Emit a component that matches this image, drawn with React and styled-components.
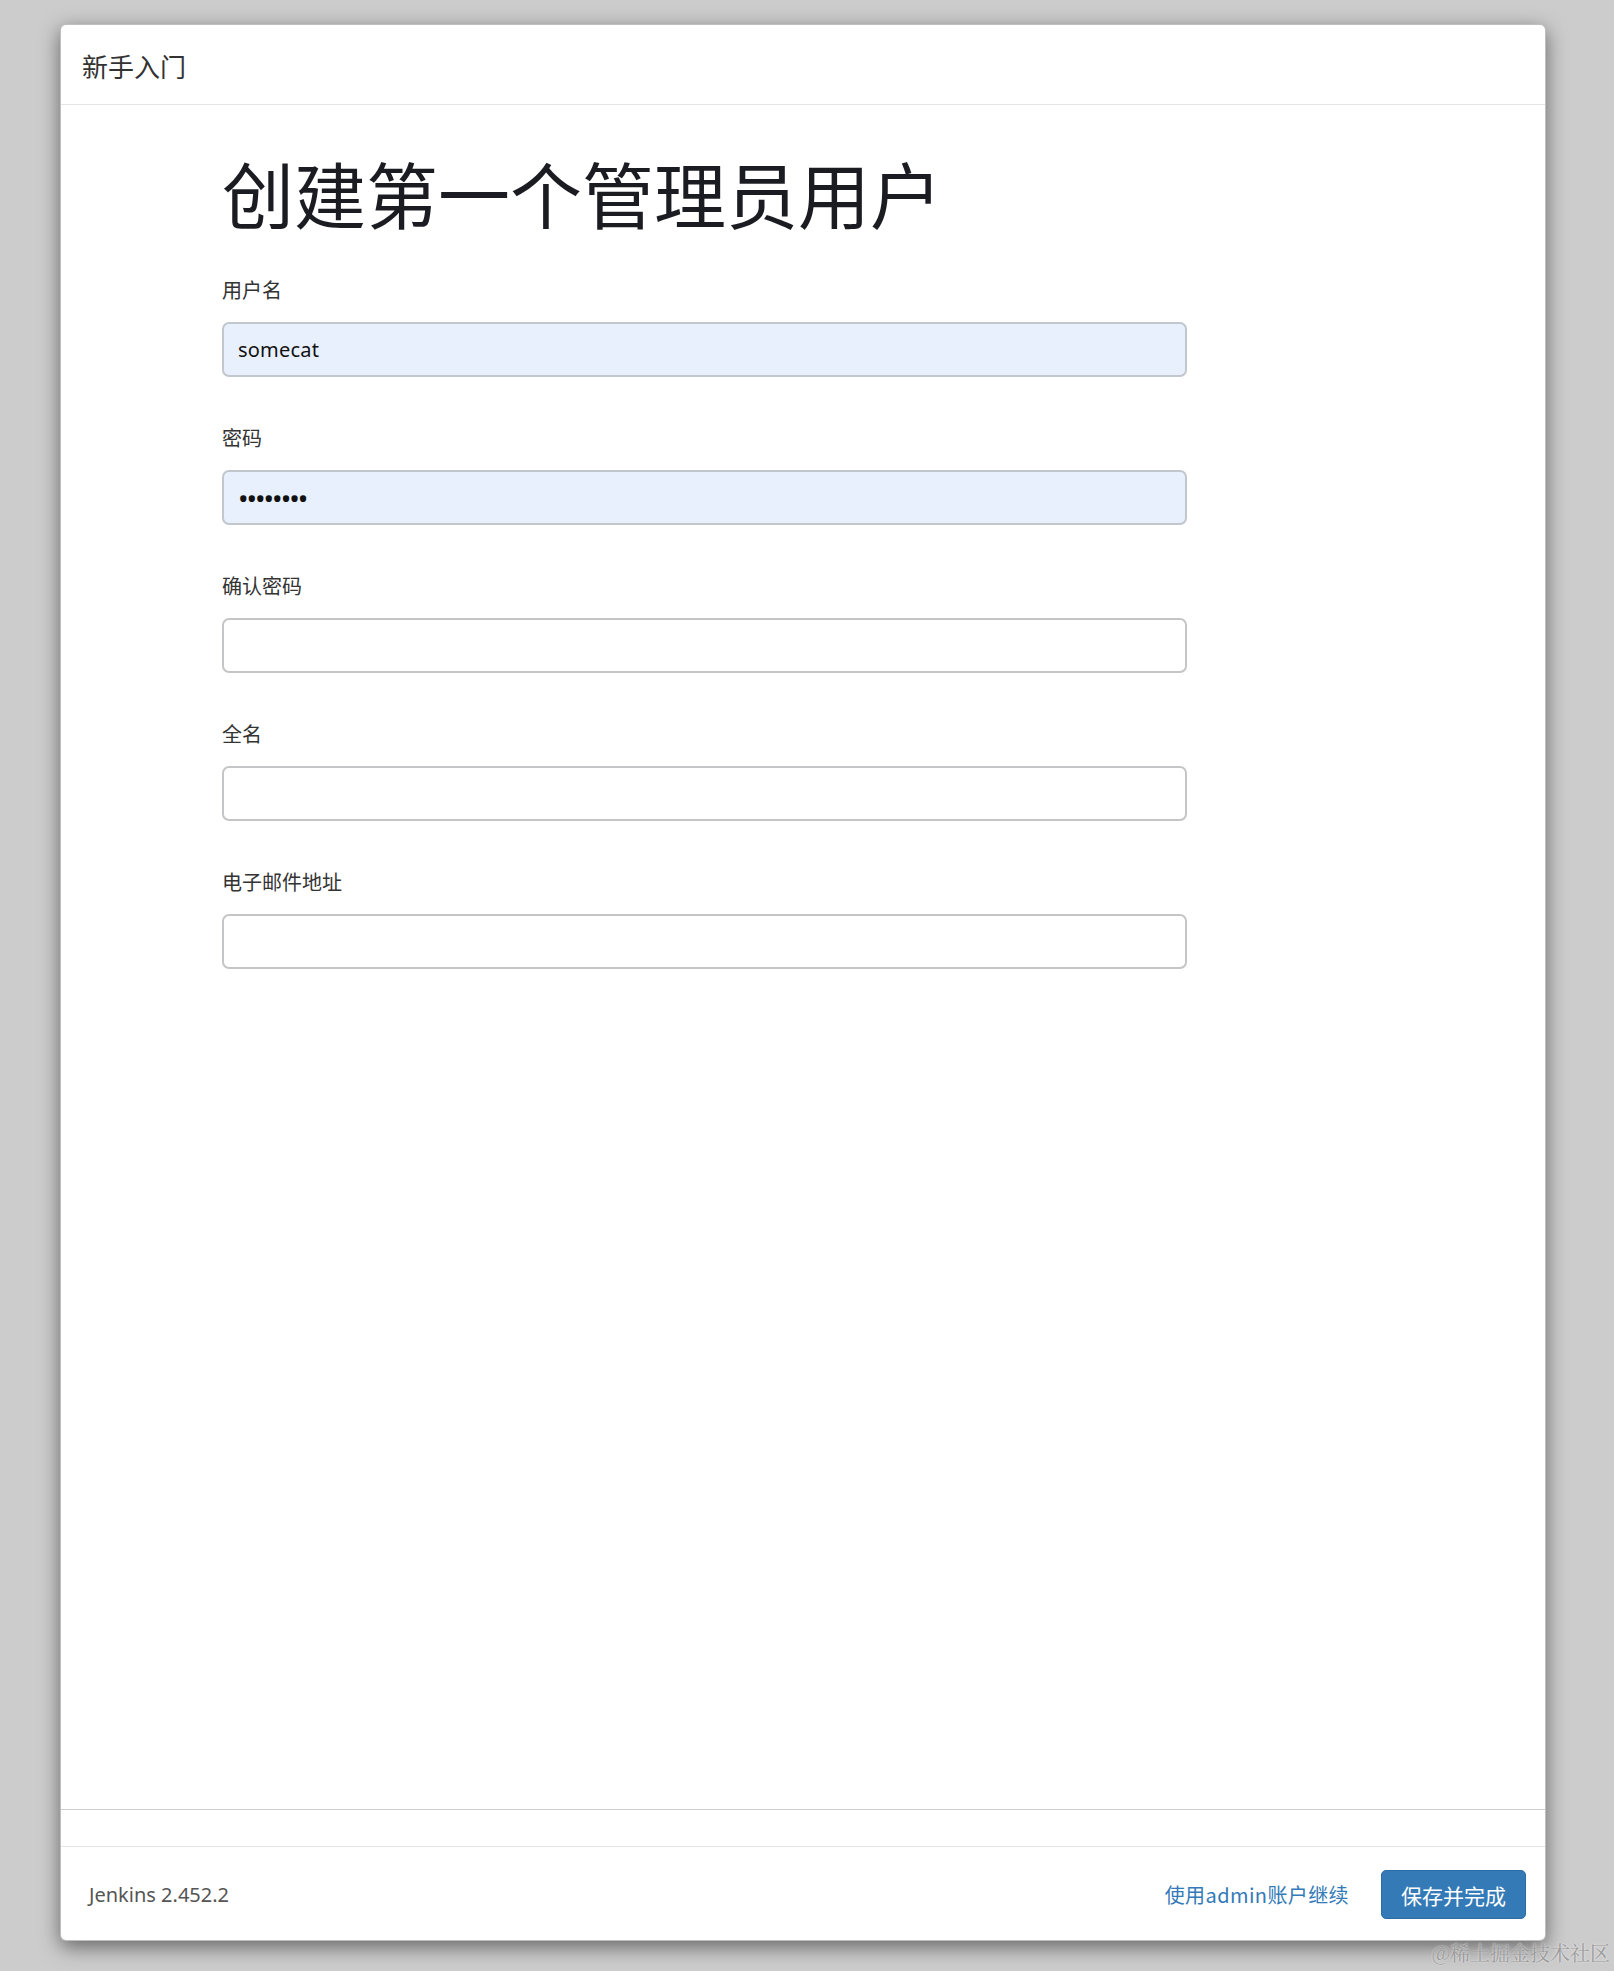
import React from "react"
import styled, { createGlobalStyle } from "styled-components"

const GlobalStyle = createGlobalStyle`
  html, body {
    margin: 0;
    padding: 0;
    background: #cccccc;
  }
  body {
    font-family: "Noto Sans", "Noto Sans CJK SC", sans-serif;
  }
`

const Page = styled.div`
  position: relative;
  width: 1614px;
  height: 1971px;
  box-sizing: border-box;
  padding: 24px 68px 30px 60px;
  display: flex;
`

const Modal = styled.div`
  flex: 1;
  display: flex;
  flex-direction: column;
  background: #fff;
  border: 1px solid rgba(0, 0, 0, 0.25);
  border-radius: 6px;
  box-shadow: 0 6px 20px rgba(0, 0, 0, 0.5);
  overflow: hidden;
`

const Header = styled.div`
  height: 80px;
  box-sizing: border-box;
  display: flex;
  align-items: center;
  padding: 2px 21px 0;
  border-bottom: 1px solid #e5e5e5;
  font-family: "Noto Sans CJK SC", sans-serif;
  font-size: 26px;
  color: #333;
`

const Body = styled.div`
  flex: 1;
  padding: 43px 0 0 161px;
  border-bottom: 1px solid #cfcfcf;
`

const Title = styled.h1`
  margin: 0 0 40px;
  font-family: "Noto Sans CJK SC", sans-serif;
  font-weight: 400;
  font-size: 72px;
  line-height: 88px;
  color: #1b1b22;
`

const Field = styled.div`
  display: flex;
  flex-direction: column;
  gap: 18px;
  width: 965px;
  margin-bottom: 47px;
`

const Label = styled.label`
  font-family: "Noto Sans CJK SC", sans-serif;
  font-size: 20px;
  line-height: 28px;
  color: #333;
`

const Input = styled.input`
  height: 55px;
  box-sizing: border-box;
  border: 2px solid ${p => (p.$filled ? "#c2c6cd" : "#c4c5c7")};
  border-radius: 7px;
  background: ${p => (p.$filled ? "#e8f0fe" : "#fff")};
  padding: 0 14px;
  font-family: "Noto Sans", sans-serif;
  font-size: ${p => (p.type === "password" ? "28px" : "20px")};
  color: #111;
  outline: none;
  letter-spacing: ${p => (p.type === "password" ? "-2px" : "0.2px")};
`

const Spacer = styled.div`
  height: 36px;
  border-bottom: 1px solid #e5e5e5;
`

const Footer = styled.div`
  height: 93px;
  box-sizing: border-box;
  display: flex;
  align-items: center;
  padding: 2px 19px 0 28px;
`

const Version = styled.div`
  margin-right: auto;
  font-family: "Noto Sans", sans-serif;
  font-size: 20px;
  color: #555;
`

const LinkButton = styled.a`
  font-family: "Noto Sans CJK SC", sans-serif;
  font-size: 20px;
  letter-spacing: 0.4px;
  color: #337ab7;
  text-decoration: none;
  margin-right: 32px;
  cursor: pointer;
`

const Primary = styled.button`
  height: 49px;
  padding: 0 19px;
  border: 1px solid #2e6da4;
  border-radius: 5px;
  background: #337ab7;
  color: #fff;
  font-family: "Noto Sans CJK SC", sans-serif;
  font-size: 21px;
  cursor: pointer;
`

const Watermark = styled.div`
  position: absolute;
  right: 4px;
  bottom: 4px;
  font-family: "Noto Serif CJK SC", "Noto Sans CJK SC", serif;
  font-size: 20px;
  color: #9a9a9a;
  text-shadow: 0 0 2px #f2f2f2;
`

const fields = [
  { label: "用户名", value: "somecat", type: "text" },
  { label: "密码", value: "password", type: "password" },
  { label: "确认密码", value: "", type: "password" },
  { label: "全名", value: "", type: "text" },
  { label: "电子邮件地址", value: "", type: "text" },
]

export default function App() {
  return (
    <>
      <GlobalStyle />
      <Page>
        <Modal>
          <Header>新手入门</Header>
          <Body>
            <Title>创建第一个管理员用户</Title>
            {fields.map(f => (
              <Field key={f.label}>
                <Label>{f.label}</Label>
                <Input type={f.type} defaultValue={f.value} $filled={!!f.value} />
              </Field>
            ))}
          </Body>
          <Spacer />
          <Footer>
            <Version>Jenkins 2.452.2</Version>
            <LinkButton>使用admin账户继续</LinkButton>
            <Primary>保存并完成</Primary>
          </Footer>
        </Modal>
        <Watermark>@稀土掘金技术社区</Watermark>
      </Page>
    </>
  )
}
